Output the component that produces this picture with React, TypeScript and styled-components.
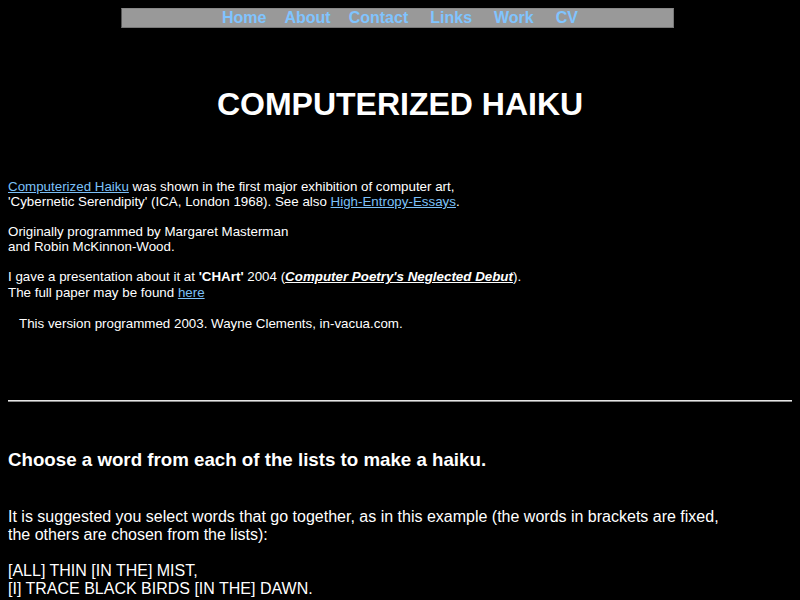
import {FC} from 'react'
import styled, {createGlobalStyle} from 'styled-components'

const GlobalStyle = createGlobalStyle`
  html, body {
    margin: 0;
    padding: 0;
    background: #000;
  }
  body {
    font-family: "Liberation Sans", Arial, Helvetica, sans-serif;
    color: #fff;
  }
`

const Page = styled.div`
  padding: 8px;
  min-height: 584px;
  background: #000;
`

const NavBar = styled.nav`
  margin-left: 113px;
  width: 546px;
  height: 18px;
  background: #999;
  border: 1px solid #777;
  border-left-color: #555;
  border-top-color: #888;
  display: flex;
  justify-content: center;
  padding-left: 5px;
  line-height: 18px;
`

const NavLink = styled.a<{$gap: number}>`
  margin-left: ${p => p.$gap}px;
  font-size: 16px;
  font-weight: bold;
  color: #80c4ff;
  text-decoration: none;

  &:first-child {
    margin-left: 0;
  }
`

const Title = styled.h1`
  margin: 58px 0 0;
  font-size: 32px;
  line-height: 37px;
  text-align: center;
  font-weight: bold;
`

const Intro = styled.div`
  margin-top: 56px;
  font-size: 13.35px;
  line-height: 15px;
`

const Para = styled.p<{$top: number; $indent?: number; $leading?: number}>`
  margin: ${p => p.$top}px 0 0;
  padding-left: ${p => p.$indent || 0}px;
  line-height: ${p => p.$leading || 15}px;
`

const Link = styled.a`
  color: #7cc0f8;
  text-decoration: underline;
`

const PaperLink = styled.a`
  color: #fff;
  font-weight: bold;
  font-style: italic;
  text-decoration: underline;
`

const Rule = styled.hr`
  margin: 69px 0 0;
  height: 0;
  border: 0;
  border-top: 1px solid #e6e6e6;
  border-bottom: 1px solid #8a8a8a;
`

const Heading = styled.h3`
  margin: 47px 0 0;
  font-size: 18.72px;
  line-height: 22px;
  font-weight: bold;
`

const Body = styled.p<{$top: number}>`
  margin: ${p => p.$top}px 0 0;
  font-size: 16px;
  line-height: 18px;
`

const links = [
  {label: 'Home', gap: 0},
  {label: 'About', gap: 18},
  {label: 'Contact', gap: 18},
  {label: 'Links', gap: 22},
  {label: 'Work', gap: 22},
  {label: 'CV', gap: 22},
]

const App: FC = () => {
  return (
    <Page>
      <GlobalStyle />
      <NavBar>
        {links.map(l => (
          <NavLink key={l.label} href="#" $gap={l.gap}>
            {l.label}
          </NavLink>
        ))}
      </NavBar>

      <Title>COMPUTERIZED HAIKU</Title>

      <Intro>
        <Para $top={0}>
          <Link href="#">Computerized Haiku</Link> was shown in the first major exhibition of computer art,
          <br />
          'Cybernetic Serendipity' (ICA, London 1968). See also <Link href="#">High-Entropy-Essays</Link>.
        </Para>
        <Para $top={15}>
          Originally programmed by Margaret Masterman
          <br />
          and Robin McKinnon-Wood.
        </Para>
        <Para $top={15} $leading={16}>
          I gave a presentation about it at <b>'CHArt'</b> 2004 (
          <PaperLink href="#">Computer Poetry's Neglected Debut</PaperLink>).
          <br />
          The full paper may be found <Link href="#">here</Link>
        </Para>
        <Para $top={15} $indent={11}>
          This version programmed 2003. Wayne Clements, in-vacua.com.
        </Para>
      </Intro>

      <Rule />

      <Heading>Choose a word from each of the lists to make a haiku.</Heading>

      <Body $top={37}>
        It is suggested you select words that go together, as in this example (the words in brackets are fixed,
        <br />
        the others are chosen from the lists):
      </Body>
      <Body $top={18}>
        [ALL] THIN [IN THE] MIST,
        <br />
        [I] TRACE BLACK BIRDS [IN THE] DAWN.
      </Body>
    </Page>
  )
}

export default App
